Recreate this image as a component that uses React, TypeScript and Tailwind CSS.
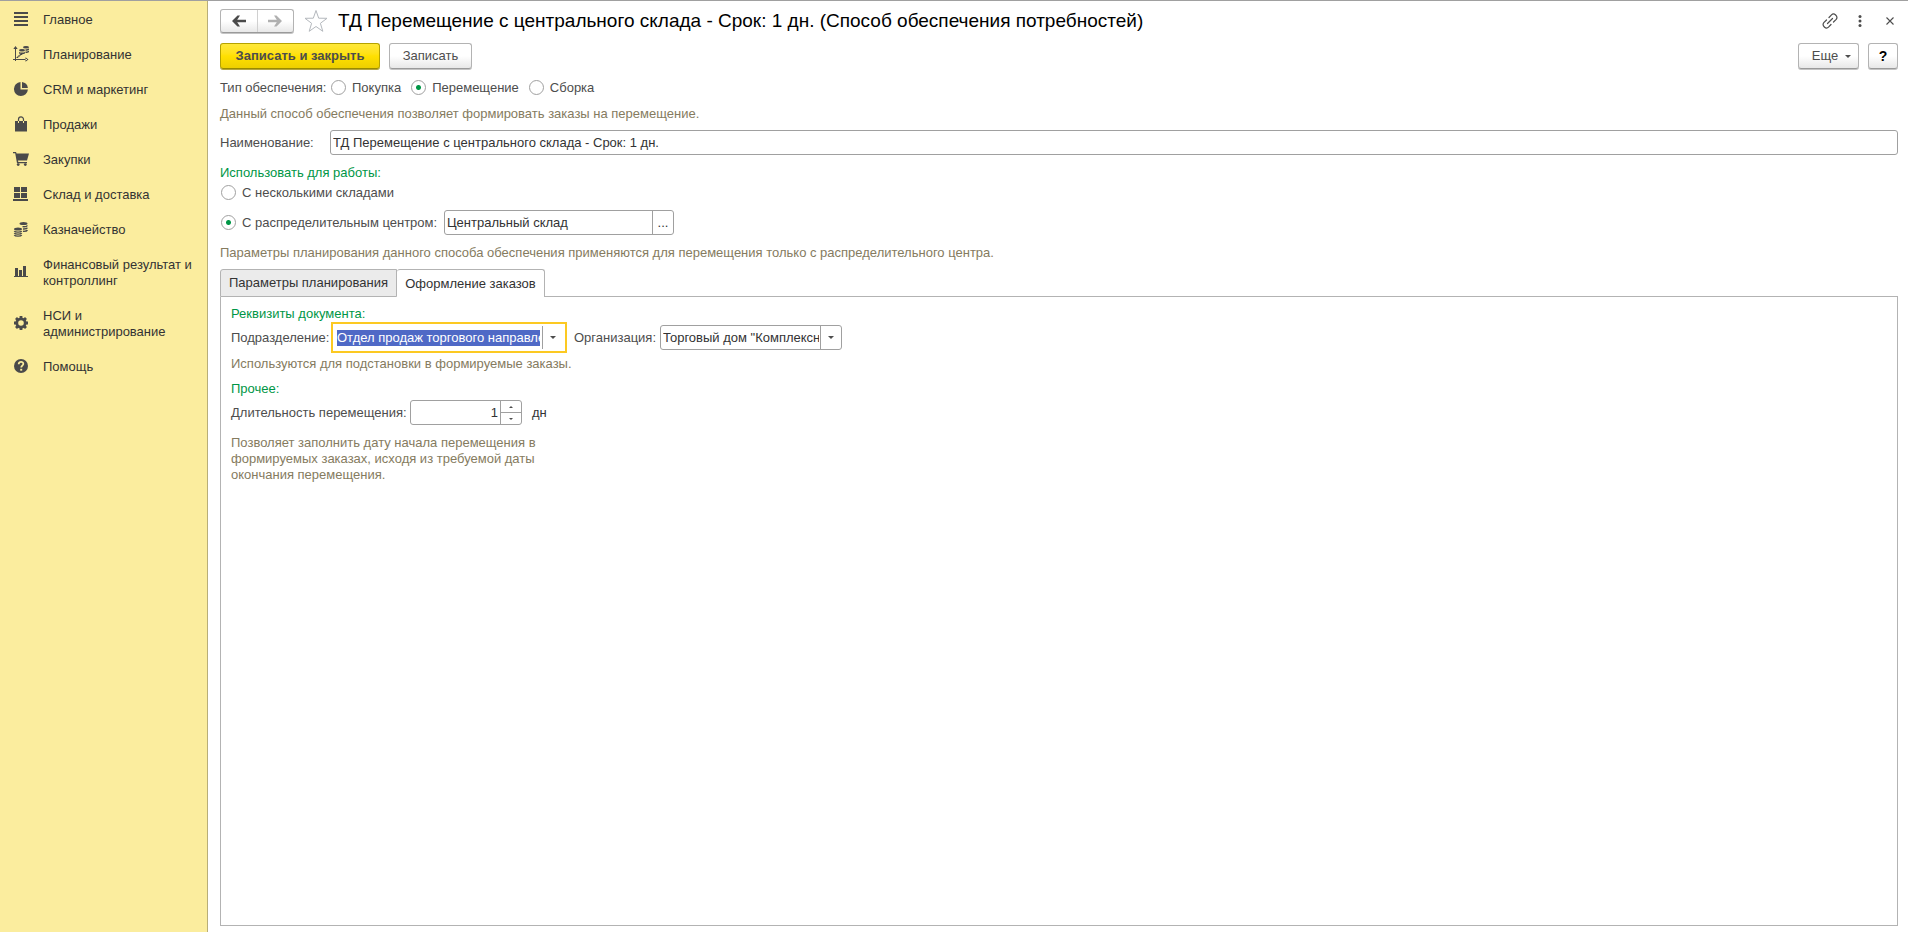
import { useEffect, useRef, useState, type ReactNode } from 'react';

const MenuIcon = () => (
  <svg viewBox="0 0 16 16" className="size-4 fill-current">
    <path d="M1 1h14v2H1zM1 5h14v2H1zM1 9h14v2H1zM1 13h14v2H1z" />
  </svg>
);

const PlanningIcon = () => (
  <svg viewBox="0 0 16 16" className="size-4 overflow-visible fill-current">
    <path d="M2 1h1v14H2zM0 13h14v1H0zM2.500 0l2.200 3H.3zM15.500 13.500l-3-2.200v4.400z" />
    <path d="M3.500 11.500h1.500v-1.500h2v-1.500h2v-1h1" fill="none" stroke="currentColor" />
    <ellipse cx="13" cy="1.300" rx="3" ry="1.300" />
    <ellipse cx="9" cy="4.300" rx="3" ry="1.300" />
    <path d="M6 5.700c1 1.200 5 1.200 6 0v1.600c-1 1.200-5 1.200-6 0zM12.500 3.300c1.500 0 3-.3 3.500-1v1.400c-.5.7-2 1-3.500 1zM12.500 5.500c1.500 0 3-.3 3.500-1v1.400c-.5.7-2 1-3.500 1z" />
  </svg>
);

const PieIcon = () => (
  <svg viewBox="0 0 16 16" className="size-4 fill-current">
    <path d="M7.500 1v7.500H14.900A7 7 0 1 1 7.500 1z" />
    <path d="M9 1.100A7 7 0 0 1 14.900 7H9z" />
  </svg>
);

const BagIcon = () => (
  <svg viewBox="0 0 16 16" className="size-4 fill-current">
    <path d="M2 5h12v10.500H2z" />
    <path d="M5.500 5V3.500a2.500 2.700 0 0 1 5 0V5" fill="none" stroke="currentColor" strokeWidth="1.200" />
    <path d="M5.500 5v2M10.500 5v2" stroke="#fbed9e" strokeWidth="1" />
  </svg>
);

const CartIcon = () => (
  <svg viewBox="0 0 16 16" className="size-4 overflow-visible fill-current">
    <path d="M0 1h3l.6 1.500H16L14 9.500H5l.3 1.500H14v1.200H4L2.200 2.300H0z" />
    <circle cx="5.200" cy="13.600" r="1.400" />
    <circle cx="12.300" cy="13.600" r="1.400" />
  </svg>
);

const WarehouseIcon = () => (
  <svg viewBox="0 0 16 16" className="size-4 fill-current">
    <path d="M1 1h6v5H1zM8 1h6v5H8zM1 7h6v5H1zM8 7h6v5H8zM0 13h15v2H0z" />
  </svg>
);

const CoinsIcon = () => (
  <svg viewBox="0 0 16 16" className="size-4 fill-current">
    <ellipse cx="10.500" cy="2.500" rx="4" ry="1.600" />
    <ellipse cx="5" cy="8" rx="4" ry="1.600" />
    <path
      d="M9.500 5.600c2 .2 4.500-.2 4.900-1.200M10 8c2 .1 4-.3 4.400-1.200M10 10.300c2 .1 4-.3 4.400-1.200M1.300 10c.7 1.500 6.700 1.500 7.400 0M1.300 12c.7 1.500 6.700 1.500 7.400 0M1.300 14c.7 1.500 6.700 1.500 7.400 0"
      fill="none"
      stroke="currentColor"
      strokeWidth="1.400"
    />
  </svg>
);

const ChartIcon = () => (
  <svg viewBox="0 0 16 16" className="size-4 fill-current">
    <path d="M2 4h3v8H2zM6 6h3v6H6zM10 2h3v10h-3zM1 12h14v1H1z" />
  </svg>
);

const GearIcon = () => (
  <svg viewBox="0 0 16 16" className="size-4">
    <circle cx="8" cy="8" r="4.200" fill="none" stroke="currentColor" strokeWidth="2.800" />
    <path
      d="M8 1v2.500M8 12.500V15M1 8h2.500M12.500 8H15M3 3l1.800 1.800M11.200 11.200 13 13M13 3l-1.800 1.800M4.800 11.200 3 13"
      stroke="currentColor"
      strokeWidth="2.800"
    />
  </svg>
);

const HelpIcon = () => (
  <svg viewBox="0 0 16 16" className="size-4">
    <circle cx="8" cy="8" r="7" fill="currentColor" />
    <path d="M5.700 6.200c0-3.200 4.800-3 4.600-.2C10.200 7.600 8.200 7.600 8.200 9.500" fill="none" stroke="#fbed9e" strokeWidth="1.800" />
    <path d="M7.200 10.800h2v1.900h-2z" fill="#fbed9e" />
  </svg>
);

const sections: { title: string; icon: ReactNode }[] = [
  { title: 'Главное', icon: <MenuIcon /> },
  { title: 'Планирование', icon: <PlanningIcon /> },
  { title: 'CRM и маркетинг', icon: <PieIcon /> },
  { title: 'Продажи', icon: <BagIcon /> },
  { title: 'Закупки', icon: <CartIcon /> },
  { title: 'Склад и доставка', icon: <WarehouseIcon /> },
  { title: 'Казначейство', icon: <CoinsIcon /> },
  { title: 'Финансовый результат и контроллинг', icon: <ChartIcon /> },
  { title: 'НСИ и администрирование', icon: <GearIcon /> },
  { title: 'Помощь', icon: <HelpIcon /> },
];

const Caret = ({ up = false, small = false }: { up?: boolean; small?: boolean }) => (
  <svg viewBox="0 0 6 3" className={small ? 'h-[2px] w-1 fill-[#4d4d4d]' : 'h-[3px] w-[6px] fill-[#4d4d4d]'}>
    <path d={up ? 'M0 3h6L3 0z' : 'M0 0h6L3 3z'} />
  </svg>
);

const buttonLook =
  'flex items-center justify-center rounded-[3px] border border-[#b3b3b3] border-b-[#9a9a9a] bg-linear-to-b from-white from-50% to-[#e8e8e8] shadow-[0_1px_0_#c4c4c4]';
const fieldLook = 'flex h-[25px] rounded-[3px] border border-[#a0a0a0] bg-white text-[#333]';

function Radio({ name, label, checked, onChange }: { name: string; label: string; checked: boolean; onChange: () => void }) {
  return (
    <label className="flex items-start gap-[6px]">
      <input
        type="radio"
        name={name}
        checked={checked}
        onChange={onChange}
        className="m-0 size-[15px] appearance-none rounded-full border border-[#a0a0a0] bg-white checked:bg-[radial-gradient(circle,#009646_2px,#fff_3px)]"
      />
      {label}
    </label>
  );
}

function Sidebar() {
  return (
    <nav className="w-52 shrink-0 border-r border-[#b8ae78] bg-[#fbed9e] pt-[9px] text-[#333]">
      <ul className="flex flex-col gap-[17px]">
        {sections.map((s) => (
          <li key={s.title}>
            <a href="#" className="flex items-center gap-[14px] pr-3 pl-[13px]">
              <span className="shrink-0 text-[#4a4a4a]">{s.icon}</span>
              <span className="pt-[2px]">{s.title}</span>
            </a>
          </li>
        ))}
      </ul>
    </nav>
  );
}

function Header() {
  return (
    <header className="flex h-6 items-center">
      <div className="flex h-6 w-[74px] rounded-[3px] border border-[#b3b3b3] border-b-[#9a9a9a] bg-linear-to-b from-white from-50% to-[#e8e8e8] shadow-[0_1px_0_#c4c4c4]">
        <button type="button" aria-label="Назад" className="flex flex-1 items-center justify-center border-r border-[#d0d0d0]">
          <svg viewBox="0 0 14 12" className="h-3 w-[14px] fill-[#4a4a4a]">
            <path d="M0 6l5.500-5.500h2.500L5.200 4.700H14v2.600H5.200L8 11.500H5.500z" />
          </svg>
        </button>
        <button type="button" aria-label="Вперед" className="flex flex-1 items-center justify-center">
          <svg viewBox="0 0 14 12" className="h-3 w-[14px] fill-[#b0b0b0]">
            <path d="M14 6L8.500.5H6l2.800 4.200H0v2.600h8.800L6 11.500h2.500z" />
          </svg>
        </button>
      </div>
      <button type="button" aria-label="В избранное" className="ml-[10px]">
        <svg viewBox="0 0 24 24" className="size-6 fill-white stroke-[#b4b8bd]">
          <path d="M12 1.500l2.700 7.700 8.300.1-6.600 5 2.400 8-6.800-4.800-6.800 4.800 2.400-8L1 9.300l8.300-.1z" />
        </svg>
      </button>
      <h1 className="ml-[10px] flex-1 text-[19px] leading-6 text-black">
        ТД Перемещение с центрального склада - Срок: 1 дн. (Способ обеспечения потребностей)
      </h1>
      <button type="button" aria-label="Получить ссылку" className="mr-5">
        <svg viewBox="0 0 16 16" className="size-4" fill="none" stroke="#4d4d4d" strokeWidth="1.200" strokeLinecap="round">
          <path d="M5.500 10.500l5-5M7 4.500l2.500-2.700c2.500-2.500 7 1.500 4.700 4.500L11.500 9M9 11.500l-2.500 2.700c-2.500 2.500-7-1.500-4.700-4.500L4.500 7" />
        </svg>
      </button>
      <button type="button" aria-label="Дополнительно" className="mr-6">
        <svg viewBox="0 0 4 12" className="h-3 w-1 fill-[#4d4d4d]">
          <circle cx="2" cy="1.600" r="1.500" />
          <circle cx="2" cy="6" r="1.500" />
          <circle cx="2" cy="10.400" r="1.500" />
        </svg>
      </button>
      <button type="button" aria-label="Закрыть" className="mr-1">
        <svg viewBox="0 0 8 8" className="size-2">
          <path d="M.5.5l7 7M7.500.5l-7 7" stroke="#4d4d4d" strokeWidth="1.100" />
        </svg>
      </button>
    </header>
  );
}

function OrderPanel() {
  const department = useRef<HTMLInputElement>(null);
  const [days, setDays] = useState(1);

  useEffect(() => {
    const input = department.current;
    if (!input) return;
    input.focus();
    input.setSelectionRange(0, input.value.length, 'backward');
    input.scrollLeft = 0;
  }, []);

  return (
    <section className="flex-1 border border-t-0 border-[#b3b3b3] px-[10px] pt-[9px]">
      <h2 className="text-[#009646]">Реквизиты документа:</h2>
      <div className="flex h-[31px] items-center">
        <label htmlFor="department" className="w-[100px]">Подразделение:</label>
        <div className="flex h-[31px] w-[236px] items-center border-2 border-[#fcc922] bg-white">
          <input
            id="department"
            ref={department}
            defaultValue="Отдел продаж торгового направления"
            className="ml-1 h-4 min-w-0 flex-1 text-[#333] outline-none selection:bg-[#4f69c6] selection:text-white"
          />
          <button type="button" aria-label="Выбрать подразделение" className="ml-[2px] flex h-[23px] w-[23px] items-center justify-center border-l border-[#a0a0a0] pr-[2px]">
            <Caret />
          </button>
        </div>
        <label htmlFor="organization" className="ml-[7px] w-[86px]">Организация:</label>
        <div className="relative">
          <select
            id="organization"
            className="block h-[25px] w-[182px] appearance-none rounded-[3px] border border-[#a0a0a0] bg-white pr-[22px] pl-[2px] text-[#333]"
          >
            <option>Торговый дом "Комплексный"</option>
          </select>
          <span className="pointer-events-none absolute inset-y-px right-px flex w-[21px] items-center justify-center border-l border-[#a0a0a0]">
            <Caret />
          </span>
        </div>
      </div>
      <p className="mt-[3px] text-[#857b60]">Используются для подстановки в формируемые заказы.</p>
      <h2 className="mt-[9px] text-[#009646]">Прочее:</h2>
      <div className="mt-[3px] flex items-center">
        <label htmlFor="duration" className="w-[179px]">Длительность перемещения:</label>
        <div className={`${fieldLook} w-[112px]`}>
          <input
            id="duration"
            inputMode="numeric"
            value={days}
            onChange={(e) => setDays(Number(e.target.value) || 0)}
            className="min-w-0 flex-1 pr-[2px] text-right outline-none"
          />
          <div className="flex w-[21px] flex-col border-l border-[#a0a0a0]">
            <button type="button" aria-label="Увеличить" onClick={() => setDays(days + 1)} className="flex flex-1 items-center justify-center border-b border-[#a0a0a0]">
              <Caret up small />
            </button>
            <button type="button" aria-label="Уменьшить" onClick={() => setDays(Math.max(0, days - 1))} className="flex flex-1 items-center justify-center">
              <Caret small />
            </button>
          </div>
        </div>
        <span className="ml-[10px] text-[#333]">дн</span>
      </div>
      <p className="mt-[10px] w-[320px] text-[#857b60]">
        Позволяет заполнить дату начала перемещения в формируемых заказах, исходя из требуемой даты окончания перемещения.
      </p>
    </section>
  );
}

export default function App() {
  const [kind, setKind] = useState('Перемещение');
  const [source, setSource] = useState('center');

  return (
    <div className="flex min-h-screen border-t border-[#a0a0a0] bg-white font-['Liberation_Sans',Arial,sans-serif] text-[13px] leading-4 text-[#4d4d4d]">
      <Sidebar />
      <main className="flex min-w-0 flex-1 flex-col pt-2 pr-[10px] pb-[6px] pl-3">
        <Header />

        <div className="mt-[10px] flex h-[26px]">
          <button
            type="button"
            className="flex w-40 items-center justify-center rounded-[3px] border border-[#b5a200] border-b-[#998a00] bg-linear-to-b from-[#ffe838] via-[#ffe000] to-[#edcf00] font-bold shadow-[0_1px_0_#b5a640]"
          >
            Записать и закрыть
          </button>
          <button type="button" className={`${buttonLook} ml-[9px] w-[83px]`}>Записать</button>
          <button type="button" className={`${buttonLook} ml-auto w-[61px] gap-[7px] pl-[6px]`}>
            Еще
            <Caret />
          </button>
          <button type="button" aria-label="Справка" className={`${buttonLook} ml-[9px] w-[30px] text-[14px] font-bold text-black`}>?</button>
        </div>

        <fieldset className="mt-[11px] flex items-center">
          <legend className="float-left w-[111px]">Тип обеспечения:</legend>
          <div className="flex gap-[10px]">
            {['Покупка', 'Перемещение', 'Сборка'].map((k) => (
              <Radio key={k} name="kind" label={k} checked={kind === k} onChange={() => setKind(k)} />
            ))}
          </div>
        </fieldset>
        <p className="mt-[10px] text-[#857b60]">Данный способ обеспечения позволяет формировать заказы на перемещение.</p>

        <div className="mt-2 flex items-center">
          <label htmlFor="title" className="w-[110px]">Наименование:</label>
          <input id="title" defaultValue="ТД Перемещение с центрального склада - Срок: 1 дн." className={`${fieldLook} min-w-0 flex-1 px-[2px]`} />
        </div>

        <h2 className="mt-[10px] text-[#009646]">Использовать для работы:</h2>
        <div className="mt-1 flex pl-px">
          <Radio name="source" label="С несколькими складами" checked={source === 'many'} onChange={() => setSource('many')} />
        </div>
        <div className="mt-[9px] flex items-center pl-px">
          <div className="w-[223px]">
            <Radio name="source" label="С распределительным центром:" checked={source === 'center'} onChange={() => setSource('center')} />
          </div>
          <div className={`${fieldLook} w-[230px]`}>
            <input aria-label="Распределительный центр" defaultValue="Центральный склад" className="min-w-0 flex-1 pl-[2px] outline-none" />
            <button type="button" aria-label="Выбрать склад" className="w-[21px] border-l border-[#a0a0a0]">...</button>
          </div>
        </div>
        <p className="mt-[10px] text-[#857b60]">
          Параметры планирования данного способа обеспечения применяются для перемещения только с распределительного центра.
        </p>

        <div role="tablist" className="mt-2 flex h-7 text-[#333]">
          <button type="button" role="tab" aria-selected="false" className="w-[177px] rounded-tl-[3px] border border-[#b3b3b3] bg-[#ebebeb]">
            Параметры планирования
          </button>
          <button type="button" role="tab" aria-selected="true" className="w-[148px] rounded-t-[3px] border-t border-r border-[#b3b3b3]">
            Оформление заказов
          </button>
          <div className="flex-1 border-b border-[#b3b3b3]" />
        </div>
        <OrderPanel />
      </main>
    </div>
  );
}
